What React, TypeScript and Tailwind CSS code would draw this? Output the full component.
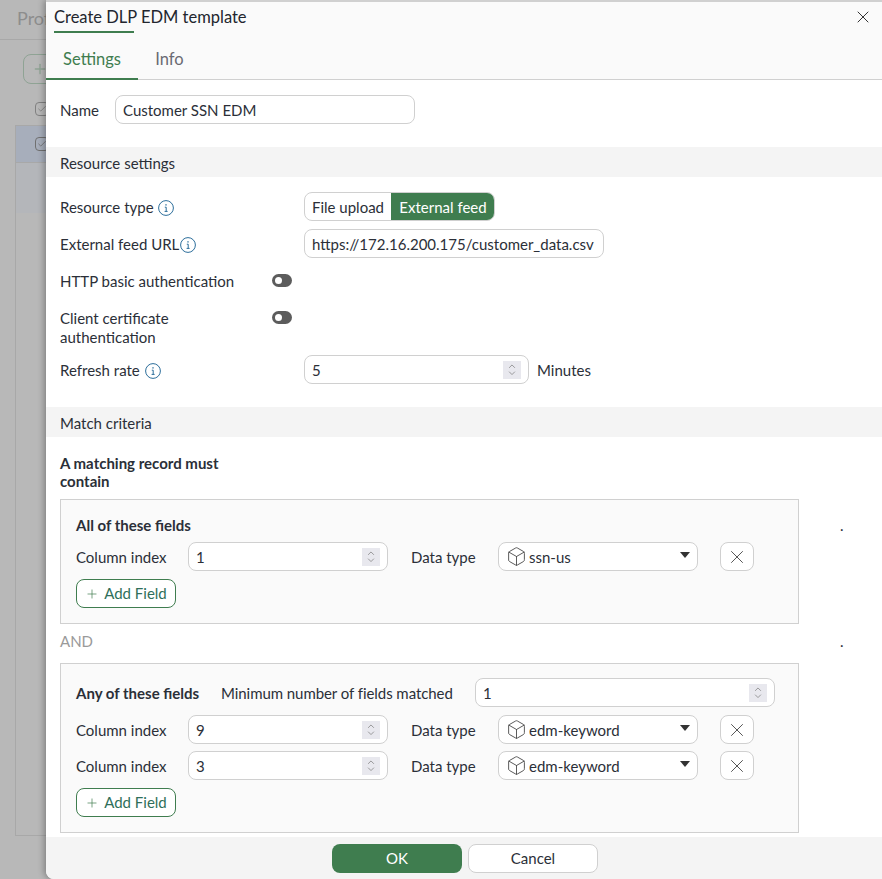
import { Box, Check, ChevronDown, ChevronUp, Plus, X } from "lucide-react";
import type { ReactNode } from "react";

const InfoIcon = () => (
  <svg viewBox="0 0 16 16" className="h-4 w-4 shrink-0 text-[#2c6e9b]" fill="none" stroke="currentColor">
    <circle cx="8" cy="8" r="7.4" strokeWidth="1" />
    <path d="M6.8 7.2H8.2V11.4M6.6 11.4H9.6" strokeWidth="1" />
    <path d="M8 4.2V5.6" strokeWidth="1.4" />
  </svg>
);

const Toggle = () => (
  <div className="flex h-[13px] w-5 items-center rounded-full bg-[#5c5c5c] pl-[3px]">
    <div className="h-[7px] w-[7px] rounded-full bg-white" />
  </div>
);

const Spinner = () => (
  <div className="flex h-[18px] w-[18px] flex-col items-center justify-center bg-[#e8e8ee] text-[#707070]">
    <ChevronUp className="-mb-[3px] h-3 w-3" strokeWidth={1.5} />
    <ChevronDown className="h-3 w-3" strokeWidth={1.5} />
  </div>
);

const NumberInput = ({ value, className }: { value: string; className: string }) => (
  <div className={`flex h-[29px] items-center justify-between rounded-lg border border-[#d0d0d0] bg-white pl-[7px] pr-[7px] ${className}`}>
    <span className="pt-[2px]">{value}</span>
    <Spinner />
  </div>
);

const Section = ({ children }: { children: ReactNode }) => (
  <div className="flex h-[30px] shrink-0 items-center bg-[#f4f4f4] px-[14px] pt-[2px]">{children}</div>
);

const FieldRow = ({ index, type, className = "" }: { index: string; type: string; className?: string }) => (
  <div className={`flex h-[29px] items-center ${className}`}>
    <span className="w-[112px] pt-[2px]">Column index</span>
    <NumberInput value={index} className="w-[200px]" />
    <span className="ml-[23px] w-[87px] pt-[2px]">Data type</span>
    <div className="flex h-[29px] w-[200px] items-center rounded-lg border border-[#d0d0d0] bg-white pl-[7px] pr-[7px]">
      <Box className="mr-[2px] h-[21px] w-[21px] text-[#444]" strokeWidth={1} />
      <span className="pt-[2px]">{type}</span>
      <span className="ml-auto mb-[3px] h-0 w-0 border-x-[5px] border-t-[6px] border-x-transparent border-t-[#333]" />
    </div>
    <button className="ml-[22px] flex h-[29px] w-[34px] items-center justify-center rounded-lg border border-[#d0d0d0] bg-white">
      <X className="h-[22px] w-[22px] text-[#333]" strokeWidth={0.9} />
    </button>
  </div>
);

const AddField = ({ className = "" }: { className?: string }) => (
  <button className={`flex h-[29px] w-[100px] items-center justify-center gap-[5px] rounded-lg border border-[#3f7d4f] bg-white text-[#2f6f5a] ${className}`}>
    <Plus className="h-[14px] w-[14px] text-[#3f7d4f]" strokeWidth={1.2} />
    Add Field
  </button>
);

export default function App() {
  return (
    <div className="relative h-[879px] w-[882px] overflow-hidden bg-[#b8b8b8] font-['Lato',sans-serif] text-[15px] leading-[19px] text-[#2b2f38]">
      <div className="h-10 border-b border-[#a8a8a8] pl-[17px] pt-[7px] text-[18px] leading-[22px] text-[#8d8d8d]">Profiles</div>
      <div className="ml-[23px] mt-[14px] flex h-[30px] w-[60px] items-center rounded-lg border border-[#8fa394] pl-2 text-[#8fa394]">
        <Plus className="h-4 w-4" />
      </div>
      <div className="ml-[35px] mt-[18px] flex h-[14px] w-[14px] items-center justify-center rounded-sm border border-[#808080]">
        <Check className="h-[10px] w-[10px] text-[#808080]" />
      </div>
      <div className="mx-[15px] mt-[9px] h-[711px] border border-[#a8a8a8]">
        <div className="flex h-[37px] items-center border-b border-[#a8a8a8] bg-[#a7aebb] pl-[19px]">
          <div className="flex h-[14px] w-[14px] items-center justify-center rounded-sm border border-[#707070]">
            <Check className="h-[10px] w-[10px] text-[#707070]" />
          </div>
        </div>
        <div className="h-[50px] bg-[#b4b6ba]" />
      </div>

      <div className="absolute bottom-0 left-[46px] right-0 top-0 flex flex-col overflow-hidden rounded-bl-lg bg-white shadow-[-2px_0_6px_rgba(0,0,0,0.3)]">
        <div className="relative h-[80px] shrink-0 border-t-2 border-[#d0d0d0] bg-[#fafafa]">
          <div className="absolute left-[8px] top-[5px] text-[16.5px] leading-[21px] text-[#22262e]">Create DLP EDM template</div>
          <div className="absolute left-[8px] top-[29px] h-[2px] w-[80px] bg-[#3f7d4f]" />
          <X className="absolute right-[9px] top-[5px] h-5 w-5 text-[#333]" strokeWidth={1.2} />
          <div className="absolute bottom-0 left-0 right-0 flex h-[46px] border-b border-[#d0d0d0] pt-[6px] text-[16.5px]">
            <div className="-mb-px flex w-[92px] items-center justify-center border-b-2 border-[#3f7d4f] text-[#3f7d4f]">Settings</div>
            <div className="flex w-[62px] items-center justify-center pl-px text-[#6a6a72]">Info</div>
          </div>
        </div>

        <div className="flex h-[67px] shrink-0 items-start px-[14px] pt-[15px]">
          <span className="flex h-[29px] w-[55px] items-center pt-[2px]">Name</span>
          <div className="flex h-[29px] w-[300px] items-center rounded-lg border border-[#d0d0d0] px-[7px] pt-[2px]">Customer SSN EDM</div>
        </div>

        <Section>Resource settings</Section>

        <div className="flex h-[230px] shrink-0 flex-col px-[14px] pt-[15px]">
          <div className="flex h-[29px] items-center">
            <span className="flex w-[244px] items-center gap-[4px] pt-[2px]">Resource type <InfoIcon /></span>
            <div className="flex h-[29px] overflow-hidden rounded-lg border border-[#d0d0d0]">
              <span className="flex w-[86px] items-center justify-center pt-[2px]">File upload</span>
              <span className="-my-px -mr-px flex w-[104px] items-center justify-center bg-[#3f7d4f] pt-[2px] text-white">External feed</span>
            </div>
          </div>
          <div className="mt-2 flex h-[29px] items-center">
            <span className="flex w-[244px] items-center gap-px pt-[2px]">External feed URL<InfoIcon /></span>
            <div className="flex h-[29px] w-[300px] items-center rounded-lg border border-[#d0d0d0] px-[7px] pt-[2px]">https://172.16.200.175/customer_data.csv</div>
          </div>
          <div className="mt-2 flex h-[29px] items-center">
            <span className="w-[212px] pt-[2px]">HTTP basic authentication</span>
            <Toggle />
          </div>
          <div className="mt-[14px] flex h-[39px] items-start">
            <span className="w-[212px] pr-8">Client certificate authentication</span>
            <div className="mt-[2px]"><Toggle /></div>
          </div>
          <div className="mt-[7px] flex h-[29px] items-center">
            <span className="flex w-[244px] items-center gap-[5px] pt-[2px]">Refresh rate <InfoIcon /></span>
            <NumberInput value="5" className="w-[225px]" />
            <span className="ml-2 pt-[2px]">Minutes</span>
          </div>
        </div>

        <Section>Match criteria</Section>

        <div className="relative flex-1 px-[14px] pt-[17px]">
          <div className="w-[200px] font-bold leading-[18px]">A matching record must contain</div>

          <div className="mt-[9px] h-[125px] w-[739px] border border-[#d0d0d0] bg-[#fafafa] px-[15px] pt-[16px]">
            <div className="font-bold">All of these fields</div>
            <FieldRow index="1" type="ssn-us" className="mt-[7px]" />
            <AddField className="mt-2" />
          </div>

          <div className="mt-[8px] h-[20px] text-[#9a9a9a]">AND</div>

          <div className="mt-[11px] h-[170px] w-[739px] border border-[#d0d0d0] bg-[#fafafa] px-[15px] pt-[14px]">
            <div className="flex h-[29px] items-center">
              <span className="w-[145px] pt-[2px] font-bold">Any of these fields</span>
              <span className="w-[254px] pt-[2px] tracking-[-0.06px]">Minimum number of fields matched</span>
              <NumberInput value="1" className="w-[300px]" />
            </div>
            <FieldRow index="9" type="edm-keyword" className="mt-2" />
            <FieldRow index="3" type="edm-keyword" className="mt-[7px]" />
            <AddField className="mt-2" />
          </div>

          <span className="absolute left-[794px] top-[79px]">.</span>
          <span className="absolute left-[794px] top-[195px]">.</span>
        </div>

        <div className="flex h-[42px] shrink-0 items-start justify-center gap-[6px] bg-[#f4f4f4] pl-[2px] pt-[7px]">
          <button className="h-[29px] w-[130px] rounded-lg bg-[#3f7d4f] text-white">OK</button>
          <button className="h-[29px] w-[130px] rounded-lg border border-[#d0d0d0] bg-white">Cancel</button>
        </div>
      </div>
    </div>
  );
}
